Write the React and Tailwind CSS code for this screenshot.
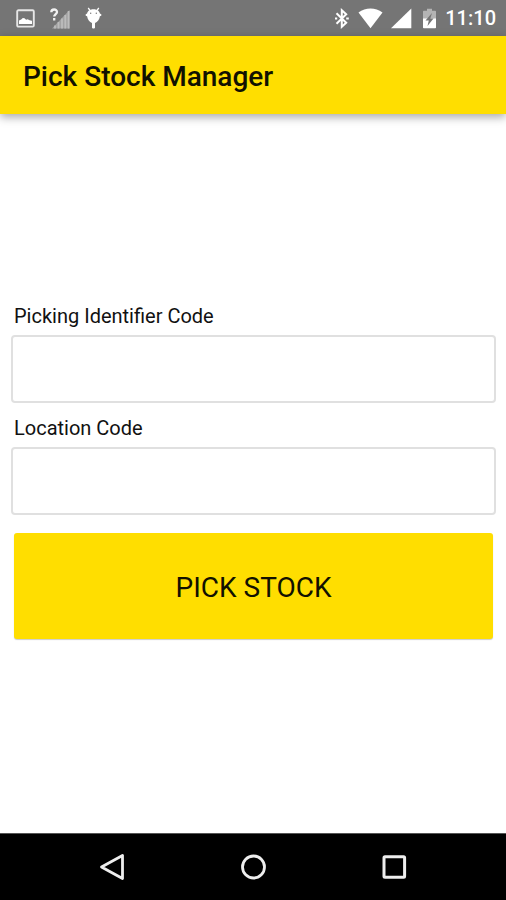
// App.jsx
import { useState } from 'react';

function StatusBar() {
  return (
    <div className="flex h-9 items-center justify-between bg-[#757575] pr-[10px] pl-4 text-white">
      <div className="flex items-center gap-[15px]">
        {/* screenshot notification */}
        <svg width="19" height="19" viewBox="0 0 19 19" className="text-[#e6e6e6]">
          <rect x="1.2" y="1.2" width="16.6" height="16.4" rx="1.2" fill="none" stroke="currentColor" strokeWidth="1.9" />
          <path d="M3 15v-3.500l2.200-1 1.600-1.500 1.700.3 1.600 1.500 1.500-.6 2 1 2.400.6V15z" fill="white" />
        </svg>
        {/* mobile signal, unknown state */}
        <svg width="20" height="21" viewBox="0 0 20 21">
          <path d="M2 20.500 19.500 2v18.500z" fill="#a2a2a2" />
          <path d="M5 20.500v-3M8.500 20.500v-6.500M12 20.500v-10M15.300 20.500v-13.500M18.600 20.500V3" stroke="#bcbcbc" strokeWidth="1.8" />
          <path d="M1.300 4.300C1.300.6 7 .6 7 4c0 2-2.800 2.200-2.800 4.600M4.200 10v2.400" fill="none" stroke="#f2f2f2" strokeWidth="2.300" />
        </svg>
        {/* debug bug */}
        <svg width="17" height="22" viewBox="0 0 17 22" fill="white">
          <path d="M3.200 1 5 3.400M13.800 1 12 3.400" stroke="white" strokeWidth="1.300" />
          <path d="M8.500 2.200C12.500 2.200 14.600 4.400 14.900 6.600l1.400.6v1.600l-1.400.5c-.4 3.400-2.400 5.800-4.900 6.600v4.500c0 1.300-3 1.300-3 0v-4.500c-2.500-.8-4.500-3.200-4.900-6.600L.7 8.800V7.200l1.400-.6C2.400 4.400 4.500 2.200 8.500 2.200z" />
          <circle cx="5.700" cy="6.300" r=".7" fill="#757575" />
          <circle cx="11.300" cy="6.300" r=".7" fill="#757575" />
        </svg>
      </div>

      <div className="flex items-center gap-2">
        {/* bluetooth */}
        <svg width="16" height="21" viewBox="0 0 16 21" fill="none" stroke="white" strokeWidth="2">
          <path d="M2.500 5.200 12.200 14.800 7.800 18.800V2.200L12.200 6.200 2.500 15.800" />
          <path d="M1 10.500h2.200M12.200 10.500h2.600" strokeWidth="2" />
        </svg>
        {/* wifi */}
        <svg width="25" height="21" viewBox="0 0 25 21" fill="white">
          <path d="M.5 4.500C7.500-.7 17.500-.7 24.500 4.500L12.500 20.300z" />
        </svg>
        {/* mobile signal */}
        <svg width="21" height="21" viewBox="0 0 21 21" fill="white">
          <path d="M20.300.5v19.800H0z" />
        </svg>
        {/* battery, charging */}
        <svg width="15" height="21" viewBox="0 0 15 21" className="ml-[2px]">
          <path d="M5 .8h5v2h3.200c.5 0 .8.300.8.800V11H1V3.600c0-.5.300-.8.800-.8H5z" fill="#b4b4b4" />
          <path d="M1 10.500h13v9c0 .5-.3.800-.8.800H1.800c-.5 0-.8-.3-.8-.8z" fill="white" />
          <path d="M10 5 3.500 12.500h3.300L5.500 18l6-7.500H8.300z" fill="#757575" />
        </svg>
        <span className="text-xl font-medium">11:10</span>
      </div>
    </div>
  );
}

function Field({ id, label, value, onChange }) {
  return (
    <div className="flex flex-col gap-[7px]">
      <label htmlFor={id} className="px-[3px] text-xl leading-6 text-[#111]">{label}</label>
      <input
        id={id}
        type="text"
        value={value}
        onChange={(e) => onChange(e.target.value)}
        className="h-[68px] w-full rounded-[4px] border-2 border-[#e0e0e0] bg-white px-3 text-xl outline-none"
      />
    </div>
  );
}

function NavBar() {
  return (
    <nav className="flex h-[67px] items-center justify-center gap-[113px] border-t border-[#555] bg-black">
      <button type="button" aria-label="Back">
        <svg width="28" height="28" viewBox="0 0 28 28" fill="none" stroke="#eee" strokeWidth="2.800" strokeLinejoin="round">
          <path d="M24.500 2.500v23L3.500 14z" />
        </svg>
      </button>
      <button type="button" aria-label="Home">
        <svg width="28" height="28" viewBox="0 0 28 28" fill="none" stroke="#eee" strokeWidth="2.800">
          <circle cx="14.500" cy="14" r="11" />
        </svg>
      </button>
      <button type="button" aria-label="Overview">
        <svg width="28" height="28" viewBox="0 0 28 28" fill="none" stroke="#eee" strokeWidth="3">
          <rect x="4" y="3.700" width="20.600" height="20.600" rx="1" />
        </svg>
      </button>
    </nav>
  );
}

function App() {
  const [pickingCode, setPickingCode] = useState('');
  const [locationCode, setLocationCode] = useState('');

  return (
    <div className="flex min-h-screen flex-col bg-white font-[Roboto,sans-serif]">
      <StatusBar />
      <header className="flex h-[78px] items-center bg-[#ffde00] px-[23px] pt-[3px] shadow-[0_3px_9px_rgba(0,0,0,0.35)]">
        <h1 className="text-[28px] leading-8 font-medium text-[#111100]">Pick Stock Manager</h1>
      </header>

      <main className="flex flex-1 flex-col justify-center pr-[10px] pb-[5px] pl-[11px]">
        <form onSubmit={(e) => e.preventDefault()} className="flex flex-col gap-[13px]">
          <Field id="picking-code" label="Picking Identifier Code" value={pickingCode} onChange={setPickingCode} />
          <Field id="location-code" label="Location Code" value={locationCode} onChange={setLocationCode} />
          <button
            type="submit"
            className="mx-[3px] mt-[5px] h-[106px] rounded-[3px] bg-[#ffde00] pt-1 text-[28px] text-[#111100] shadow-[0_1px_1px_rgba(0,0,0,0.2)]"
          >
            PICK STOCK
          </button>
        </form>
      </main>

      <NavBar />
    </div>
  );
}

export default App;
